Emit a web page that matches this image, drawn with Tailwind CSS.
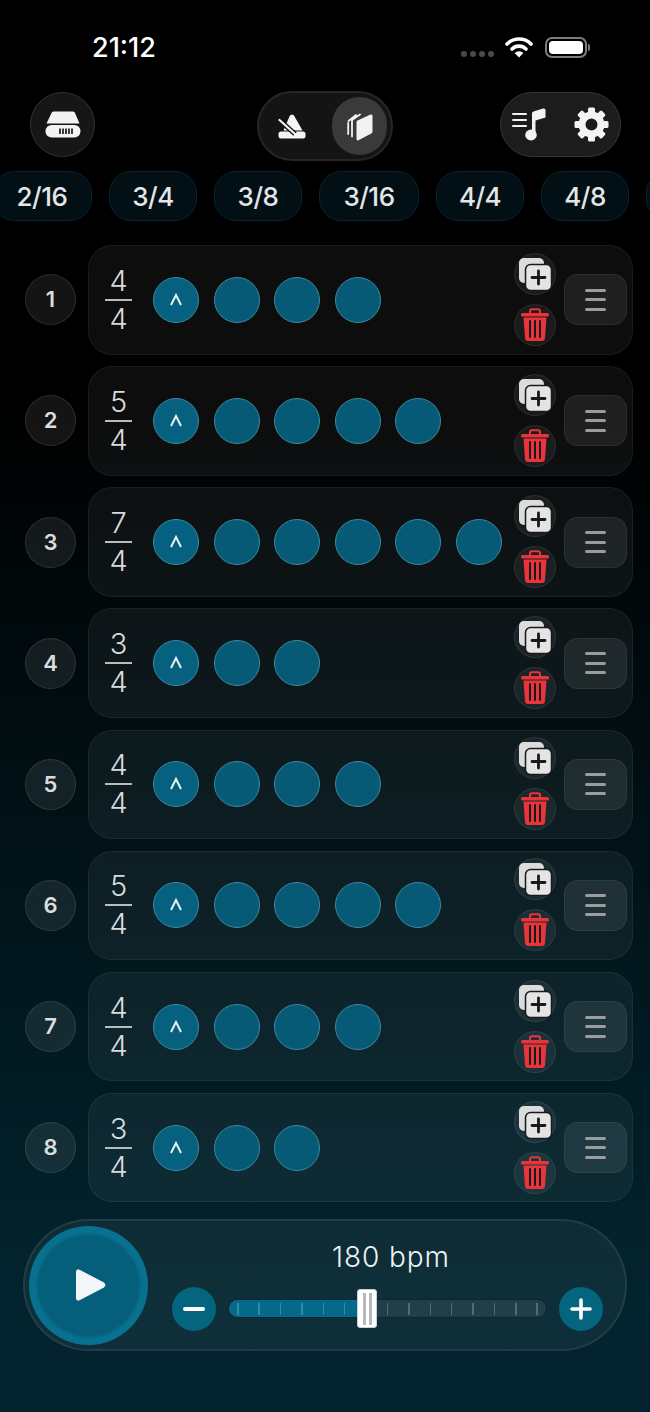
<!DOCTYPE html>
<html lang="en">
<head>
    <meta charset="UTF-8">
    <meta name="viewport" content="width=device-width, initial-scale=1.0">
    <title>Metronome Setlist</title>
    <script src="https://cdn.jsdelivr.net/npm/@tailwindcss/browser@4"></script>
</head>
<body class="w-[650px] h-[1412px] overflow-hidden bg-[linear-gradient(to_bottom,#000000_0%,#000000_28%,#02242f_92%,#02222e_100%)] text-white font-[family-name:Inter]">

    <!-- Status bar -->
    <div class="h-[91px] relative">
        <div class="flex items-start pt-[33px] pl-[92px] pr-[60px]">
            <span class="text-[27px] leading-[30px] font-medium text-white">21:12</span>
            <div class="ml-auto flex items-center mt-[3px]">
                <div class="flex gap-[3px] mt-[14px] mr-[11px]">
                    <i class="w-[6px] h-[6px] rounded-full bg-[#4a4a4a]"></i>
                    <i class="w-[6px] h-[6px] rounded-full bg-[#4a4a4a]"></i>
                    <i class="w-[6px] h-[6px] rounded-full bg-[#4a4a4a]"></i>
                    <i class="w-[6px] h-[6px] rounded-full bg-[#4a4a4a]"></i>
                </div>
                <svg width="28" height="22" viewBox="0 0 28 22" class="mr-[12px]">
                    <path d="M2 8 A17 17 0 0 1 26 8" fill="none" stroke="#fff" stroke-width="3.6" stroke-linecap="round"/>
                    <path d="M7 13 A10 10 0 0 1 21 13" fill="none" stroke="#fff" stroke-width="3.6" stroke-linecap="round"/>
                    <path d="M9.6 17 L14 21.5 L18.4 17 A6.5 6.5 0 0 0 9.6 17 Z" fill="#fff"/>
                </svg>
                <div class="flex items-center">
                    <div class="w-[42px] h-[21px] rounded-[7px] border-[2px] border-[#7d7d7d] p-[2px]">
                        <div class="w-full h-full rounded-[4px] bg-white"></div>
                    </div>
                    <div class="w-[2px] h-[7px] ml-[1px] rounded-r-full bg-[#7d7d7d]"></div>
                </div>
            </div>
        </div>
    </div>

    <!-- Top controls -->
    <div class="h-[70px] pl-[30px] pr-[29px] flex items-start">
        <button class="w-[65px] h-[65px] mt-[1px] rounded-full bg-[#161616] border border-[#333333] flex items-center justify-center">
            <svg width="36" height="27" viewBox="0 0 36 27">
                <path d="M8.5 0.5 H28 Q29.500 0.500 30 2 L34.500 12.500 H1.500 L6.500 2 Q7 0.500 8.500 0.500 Z" fill="#f3f3f3"/>
                <rect x="0.500" y="14" width="35" height="12.500" rx="6.200" fill="#f3f3f3"/>
                <path d="M15 17.500 v5.500 M18 17.500 v5.500 M21 17.500 v5.500 M24 17.500 v5.500 M27 17.500 v5.500" stroke="#1a1a1a" stroke-width="1.700"/>
            </svg>
        </button>

        <div class="ml-[162px] w-[136px] h-[70px] rounded-full bg-[#141414] border-[2px] border-[#262626] flex items-center pl-[19px] pr-[4px]">
            <svg width="28" height="25" viewBox="0 0 28 25">
                <path d="M14 0.500 Q15.500 0.500 16.300 2 L24.500 16.500 H5.500 L11.700 2 Q12.500 0.500 14 0.500 Z" fill="#f5f5f5"/>
                <rect x="0.500" y="17.500" width="27" height="7" rx="2.500" fill="#f5f5f5"/>
                <path d="M1.500 6 L17 20" stroke="#141414" stroke-width="5"/>
                <path d="M1.500 6 L17 20" stroke="#f5f5f5" stroke-width="2.200" stroke-linecap="round"/>
            </svg>
            <div class="ml-auto w-[55px] h-[58px] rounded-full bg-[#3a3a3a] flex items-center justify-center">
                <svg width="26" height="29" viewBox="0 0 26 29">
                    <path d="M1.200 11 V22 M5 8 V24.500" stroke="#f2f2f2" stroke-width="1.800" stroke-linecap="round"/>
                    <path d="M5 8 L13 2.500 M1.500 9 L9 3" stroke="#f2f2f2" stroke-width="1.800" stroke-linecap="round"/>
                    <path d="M9.500 10 Q9.500 9 10.500 8.500 L23.500 2.500 Q25.500 2 25.500 4 V19.500 Q25.500 20.800 24.300 21.500 L11.500 28.300 Q9.500 29 9.500 27 Z" fill="#f2f2f2"/>
                </svg>
            </div>
        </div>

        <div class="ml-auto w-[121px] h-[65px] mt-[1px] rounded-full bg-[#1c1c1c] border border-[#363636] flex items-center pl-[11px] pr-[11px] justify-between">
            <svg width="34" height="33" viewBox="0 0 34 33">
                <path d="M1 6 H14 M1 12 H14 M1 18 H14" stroke="#f3f3f3" stroke-width="2" stroke-linecap="round"/>
                <path d="M20 26 V5.500 Q20 4 21.500 3.500 L31 0.500 Q33.500 0 33.500 2 V9.500 L23.500 12.500 V26 Z" fill="#f3f3f3"/>
                <ellipse cx="19" cy="27" rx="5.800" ry="5.400" fill="#f3f3f3"/>
            </svg>
            <svg width="35" height="35" viewBox="0 0 35 35">
                <circle cx="17.500" cy="17.500" r="9.500" fill="none" stroke="#f3f3f3" stroke-width="7"/>
                <g fill="#f3f3f3">
                    <rect x="14" y="0.500" width="7" height="8" rx="1.500"/>
                    <rect x="14" y="0.500" width="7" height="8" rx="1.500" transform="rotate(45 17.500 17.500)"/>
                    <rect x="14" y="0.500" width="7" height="8" rx="1.500" transform="rotate(90 17.500 17.500)"/>
                    <rect x="14" y="0.500" width="7" height="8" rx="1.500" transform="rotate(135 17.500 17.500)"/>
                    <rect x="14" y="0.500" width="7" height="8" rx="1.500" transform="rotate(180 17.500 17.500)"/>
                    <rect x="14" y="0.500" width="7" height="8" rx="1.500" transform="rotate(225 17.500 17.500)"/>
                    <rect x="14" y="0.500" width="7" height="8" rx="1.500" transform="rotate(270 17.500 17.500)"/>
                    <rect x="14" y="0.500" width="7" height="8" rx="1.500" transform="rotate(315 17.500 17.500)"/>
                </g>
            </svg>
        </div>
    </div>

    <!-- Time signature chips -->
    <div id="chips" class="mt-[10px] h-[50px] flex gap-[17px] -ml-[8px] w-[658px] overflow-hidden"></div>

    <!-- Bars -->
    <div id="bars" class="mt-[24px] pl-[25px] pr-[17px] flex flex-col gap-[11.640px]"></div>

    <!-- Player -->
    <div class="mt-[17px] mx-[23px] h-[132px] rounded-full bg-white/5 border-[2px] border-white/8 flex items-center pl-[4px] pr-[22px]">
        <button class="w-[119px] h-[119px] shrink-0 rounded-full bg-[radial-gradient(closest-side,#055e7a_0%,#055e7a_83%,#07718f_90%,#07718f_100%)] flex items-center justify-center">
            <svg width="32" height="36" viewBox="0 0 32 36" class="ml-[5px]">
                <path d="M4 3 L29 16 Q31 18 29 20 L4 33 Q1.500 34 1.500 31 V5 Q1.500 2 4 3 Z" fill="#f3f7f9" stroke="#f3f7f9" stroke-linejoin="round"/>
            </svg>
        </button>
        <div class="ml-[24px] flex-1 flex flex-col items-center">
            <div class="pl-[7px] text-[28px] leading-[32px] font-light tracking-[0.9px] text-[#eef3f5] mt-[1px] mb-[14px]">180 bpm</div>
            <div class="w-full flex items-center">
                <button class="w-[44px] h-[44px] rounded-full bg-[#05657f] flex items-center justify-center">
                    <i class="w-[22px] h-[4px] rounded-full bg-white"></i>
                </button>
                <div class="relative ml-[12px] flex-1 h-[19px] rounded-full bg-[#203f4a] border border-[#0b2630] overflow-visible">
                    <div class="absolute left-0 top-0 bottom-0 w-[135px] rounded-l-full bg-[#05698a]"></div>
                    <div id="ticks" class="relative h-full flex items-center justify-between px-[8px]"></div>
                    <div class="absolute left-[128px] top-[-11px] w-[20px] h-[39px] rounded-[3px] bg-white border border-[#c8d0d4] flex items-center justify-center gap-[3px]">
                        <i class="w-[3px] h-[32px] bg-[#b5b9bb]"></i>
                        <i class="w-[3px] h-[32px] bg-[#b5b9bb]"></i>
                    </div>
                </div>
                <button class="ml-[12px] w-[44px] h-[44px] rounded-full bg-[#05657f] flex items-center justify-center">
                    <svg width="22" height="22" viewBox="0 0 22 22"><path d="M11 2 V20 M2 11 H20" stroke="#fff" stroke-width="3.600" stroke-linecap="round"/></svg>
                </button>
            </div>
        </div>
    </div>

    <script>
        const chipLabels = ['2/16', '3/4', '3/8', '3/16', '4/4', '4/8', ''];
        const bars = [[4, 4], [5, 4], [7, 4], [3, 4], [4, 4], [5, 4], [4, 4], [3, 4]];

        document.getElementById('chips').innerHTML = chipLabels.map(label => {
            const width = label.length > 3 ? 'w-[100px]' : 'w-[88px]';
            return `<div class="${width} h-[50px] shrink-0 rounded-[22px] bg-[#020f15] border border-[#06242f] flex items-center justify-center text-[26px] font-medium tracking-[-0.5px] text-[#e3e6e8]">${label}</div>`;
        }).join('');

        function beat(index) {
            const accent = index === 0
                ? `<svg width="14" height="14" viewBox="0 0 14 14"><path d="M2 12 L7 2 L12 12" fill="none" stroke="#e8f0f3" stroke-width="2"/></svg>`
                : '';
            const colour = index === 0 ? 'bg-[#05617f]' : 'bg-[#075a75]';
            return `<div class="w-[46px] h-[46px] shrink-0 rounded-full ${colour} border border-[#3a8aa0] flex items-center justify-center">${accent}</div>`;
        }

        document.getElementById('bars').innerHTML = bars.map(([top, bottom], i) => `
            <div class="flex items-center gap-[12px]">
                <div class="w-[51px] h-[51px] shrink-0 rounded-full bg-white/8 border border-white/10 flex items-center justify-center text-[22px] font-semibold text-[#dadddf]">${i + 1}</div>
                <div class="flex-1 h-[109.500px] rounded-[24px] bg-white/5 border border-white/6 flex items-center pl-[16px] pr-[5px]">
                    <div class="w-[27px] flex flex-col items-center text-[29px] leading-[34px] font-light text-[#d8dbdd]">
                        <span>${top}</span>
                        <i class="w-[27px] h-[2px] bg-[#b9bcbe] my-[1px]"></i>
                        <span>${bottom}</span>
                    </div>
                    <div class="ml-[21px] flex gap-[14.600px]">${Array.from({ length: top === 7 ? 6 : top }, (_, b) => beat(b)).join('')}</div>
                    <div class="ml-auto flex flex-col gap-[9px] mb-[1px]">
                        <button class="w-[42px] h-[42px] rounded-full bg-white/6 border border-white/8 flex items-center justify-center">
                            <svg width="34" height="34" viewBox="0 0 34 34">
                                <rect x="1" y="1" width="25" height="25" rx="5" fill="#dcdcdc"/>
                                <rect x="7.500" y="7.500" width="26" height="26" rx="5" fill="#e4e4e4" stroke="#17191a" stroke-width="1.500"/>
                                <path d="M20.500 14 V27 M14 20.500 H27" stroke="#17191a" stroke-width="2.800" stroke-linecap="round"/>
                            </svg>
                        </button>
                        <button class="w-[42px] h-[42px] rounded-full bg-white/6 border border-white/8 flex items-center justify-center">
                            <svg width="30" height="34" viewBox="0 0 30 34">
                                <path d="M10 5 V3 Q10 1.200 12 1.200 H18 Q20 1.200 20 3 V5" fill="none" stroke="#e8343a" stroke-width="2"/>
                                <rect x="1" y="5" width="28" height="3.500" rx="1.500" fill="#e8343a"/>
                                <path d="M3.500 9.500 H26.500 L25 30 Q24.800 33 22 33 H8 Q5.200 33 5 30 Z" fill="#e8343a"/>
                                <path d="M10 13 V29 M15 13 V29 M20 13 V29" stroke="#17191a" stroke-width="2" stroke-linecap="round"/>
                            </svg>
                        </button>
                    </div>
                    <button class="ml-[8px] w-[63px] h-[51px] shrink-0 rounded-[14px] bg-white/8 border border-white/6 flex flex-col items-center justify-center gap-[6.500px]">
                        <i class="w-[21px] h-[3px] rounded-full bg-[#9a9c9d]"></i>
                        <i class="w-[21px] h-[3px] rounded-full bg-[#9a9c9d]"></i>
                        <i class="w-[21px] h-[3px] rounded-full bg-[#9a9c9d]"></i>
                    </button>
                </div>
            </div>`).join('');

        document.getElementById('ticks').innerHTML = Array.from({ length: 15 }, (_, i) => {
            const colour = i < 6 ? 'bg-[#2f8aa6]' : 'bg-[#4d6e79]';
            return `<i class="w-[1.500px] h-[12px] ${colour}"></i>`;
        }).join('');
    </script>
</body>
</html>
